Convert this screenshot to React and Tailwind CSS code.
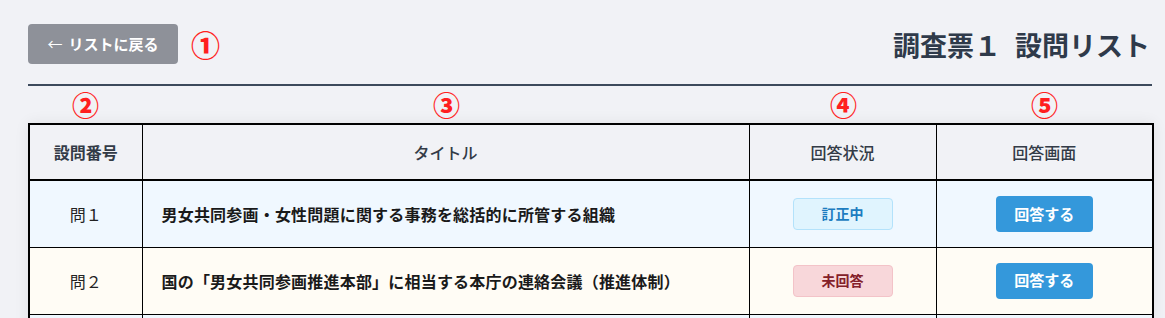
import React from "react";

const rows = [
  { no: "問１", title: "男女共同参画・女性問題に関する事務を総括的に所管する組織", status: "訂正中", bg: "bg-[#f0f8ff]" },
  { no: "問２", title: "国の「男女共同参画推進本部」に相当する本庁の連絡会議（推進体制）", status: "未回答", bg: "bg-[#fffcf5]" },
  { no: "問３", title: "男女共同参画に関する審議会等", status: "未回答", bg: "bg-[#f0f8ff]" },
];

function Badge({ status }) {
  if (status === "訂正中") {
    return (
      <span className="inline-flex items-center justify-center w-[100px] h-[32px] rounded-[4px] border border-[#b3e2fb] bg-[#e0f4fe] text-[#1c7cc0] text-[14px] font-bold">
        {status}
      </span>
    );
  }
  return (
    <span className="inline-flex items-center justify-center w-[100px] h-[32px] rounded-[4px] border border-[#f3c3c8] bg-[#f8d7da] text-[#842029] text-[14px] font-bold">
      {status}
    </span>
  );
}

export default function App() {
  return (
    <div className="min-h-screen bg-[#f1f2f6] font-['Noto_Sans_CJK_JP',sans-serif] text-[#222]">
      <div className="ml-[28px] w-[1124px] pt-[24px]">
        <div className="flex items-center justify-between h-[40px]">
          <div className="flex items-center gap-[13px]">
            <button className="flex items-center justify-center w-[150px] h-[40px] rounded-[4px] bg-[#8e9199] text-white text-[15px] font-bold">
              <span className="mr-[6px] font-normal">←</span>リストに戻る
            </button>
            <span className="text-[#ff1f1f] text-[29px] font-black leading-none">①</span>
          </div>
          <h1 className="flex items-center text-[27px] font-bold text-[#2f3a4a] leading-none mr-[2px]">
            <span>調査票１</span>
            <span className="inline-block w-[14px]" />
            <span>設問リスト</span>
          </h1>
        </div>
        <div className="mt-[20px] h-[2px] bg-[#3d4a5c]" />
        <div className="grid grid-cols-[115px_607px_187px_215px] h-[37px] items-center text-[#ff1f1f] text-[27px] font-black leading-none">
          <div className="text-center">②</div>
          <div className="text-center">③</div>
          <div className="text-center">④</div>
          <div className="text-center">⑤</div>
        </div>
        <table className="w-[1124px] table-fixed border-collapse border-2 border-black shadow-[0_0_14px_rgba(0,0,0,0.07)]">
          <colgroup>
            <col className="w-[113px]" />
            <col className="w-[607px]" />
            <col className="w-[187px]" />
            <col className="w-[217px]" />
          </colgroup>
          <thead>
            <tr className="h-[56px] bg-[#f1f2f6] border-b-2 border-black text-[#333b47] text-[16px]">
              <th className="border border-black border-b-2 font-bold">設問番号</th>
              <th className="border border-black border-b-2 font-medium">タイトル</th>
              <th className="border border-black border-b-2 font-medium">回答状況</th>
              <th className="border border-black border-b-2 font-medium">回答画面</th>
            </tr>
          </thead>
          <tbody>
            {rows.map((r) => (
              <tr key={r.no} className={`h-[67px] ${r.bg}`}>
                <td className="border border-black text-center text-[16px] text-[#222]">{r.no}</td>
                <td className="border border-black pl-[19px] text-[16px] font-bold text-[#1a1a1a] tracking-[0.2px]">{r.title}</td>
                <td className="border border-black text-center">
                  <Badge status={r.status} />
                </td>
                <td className="border border-black text-center">
                  <button className="inline-flex items-center justify-center w-[97px] h-[36px] rounded-[4px] bg-[#3498db] text-white text-[15px] font-bold">
                    回答する
                  </button>
                </td>
              </tr>
            ))}
          </tbody>
        </table>
      </div>
    </div>
  );
}
